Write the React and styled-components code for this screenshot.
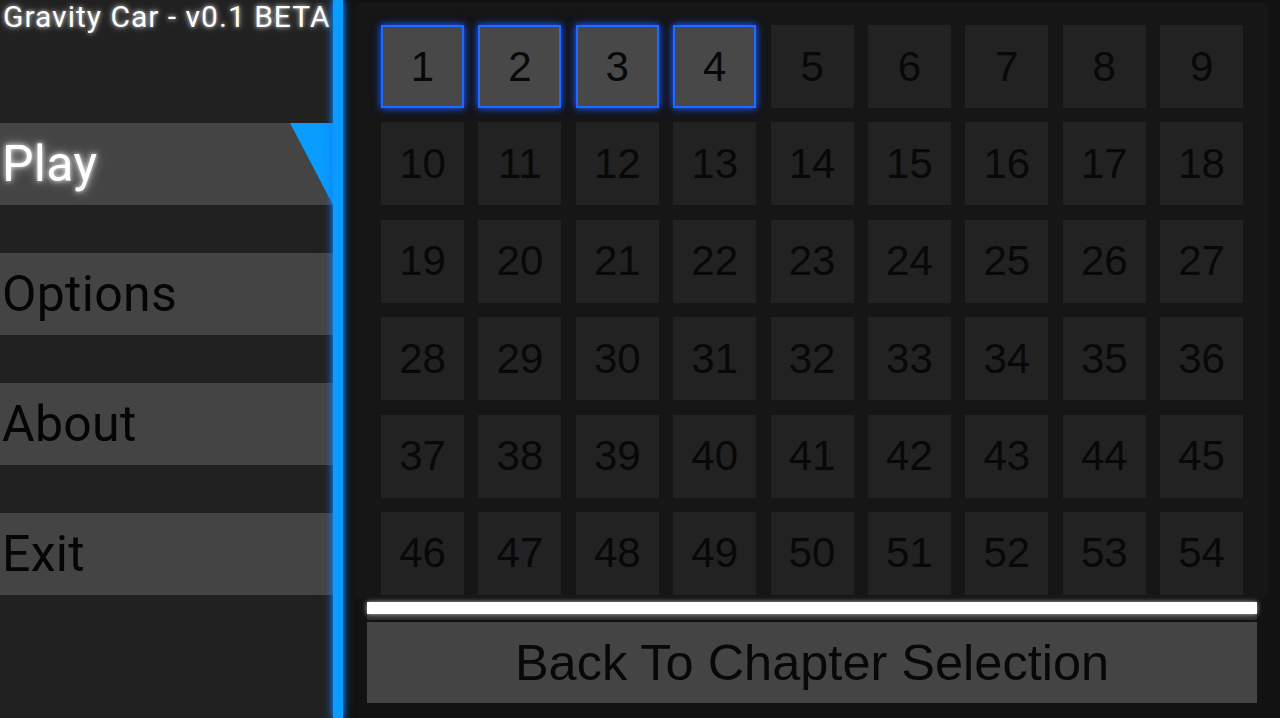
import React from 'react';
import styled, { createGlobalStyle } from 'styled-components';

const GlobalStyle = createGlobalStyle`
    html, body {
        margin: 0;
        padding: 0;
        background-color: #121212;
        overflow: hidden;
    }
`;

const Principal = styled.div`
    width: 1280px;
    height: 718px;
    display: flex;
    background-color: #121212;
`;

const BarraLateral = styled.div`
    width: 333px;
    flex-shrink: 0;
    background-color: #212121;
    display: flex;
    flex-direction: column;
    gap: 48px;
`;

const Titulo = styled.div`
    height: 75px;
    padding-left: 3px;
    font-family: Roboto, "Liberation Sans", sans-serif;
    font-size: 30px;
    letter-spacing: 1px;
    line-height: 34px;
    color: #ffffff;
    white-space: nowrap;
    text-shadow: 0 0 4px rgba(255, 255, 255, 0.7), 0 0 8px rgba(255, 255, 255, 0.4);
`;

const Opcion = styled.div`
    position: relative;
    height: 82px;
    display: flex;
    align-items: center;
    padding-left: 2px;
    background-color: #444444;
    font-family: Roboto, "Liberation Sans", sans-serif;
    font-size: 50px;
    letter-spacing: 0.3px;
    color: ${p => (p.$activa ? '#ffffff' : '#050505')};
    text-shadow: ${p => (p.$activa ? '0 0 5px rgba(255,255,255,0.9), 0 0 12px rgba(255,255,255,0.6)' : 'none')};

    &::after {
        content: '';
        display: ${p => (p.$activa ? 'block' : 'none')};
        position: absolute;
        top: 0;
        right: 0;
        width: 43px;
        height: 82px;
        background-color: #0a9cff;
        clip-path: polygon(0 0, 100% 0, 100% 100%);
    }
`;

const Separador = styled.div`
    width: 10px;
    flex-shrink: 0;
    background-color: #0a9cff;
    box-shadow: 0 0 6px #0a8cff, 0 0 12px rgba(10, 120, 255, 0.6);
    z-index: 1;
`;

const PanelNiveles = styled.div`
    flex: 1;
    display: flex;
    flex-direction: column;
    padding: 3px 12px 15px 12px;
`;

const Marco = styled.div`
    flex: 1;
    background-color: #161616;
    padding: 22px 0 0 26px;
    overflow: hidden;
`;

const Cuadricula = styled.div`
    display: grid;
    grid-template-columns: repeat(9, 83px);
    grid-auto-rows: 83px;
    gap: 14.4px;
`;

const Nivel = styled.div`
    box-sizing: border-box;
    display: flex;
    align-items: center;
    justify-content: center;
    background-color: ${p => (p.$abierto ? '#484848' : '#222222')};
    border: ${p => (p.$abierto ? '2px solid #1f6bff' : 'none')};
    box-shadow: ${p => (p.$abierto ? '0 0 6px #1a55ff, 0 0 10px rgba(20, 80, 255, 0.5)' : 'none')};
    font-family: "Liberation Sans", Arial, sans-serif;
    font-size: 42px;
    color: #080808;
`;

const Pie = styled.div`
    display: flex;
    flex-direction: column;
    padding: 0 11px 0 12px;
`;

const Linea = styled.div`
    height: 12px;
    margin-top: 4px;
    background-color: #ffffff;
    box-shadow: 0 0 5px rgba(255, 255, 255, 0.7), 0 6px 0 #2b2b2b;
`;

const BotonVolver = styled.div`
    height: 81px;
    margin-top: 8px;
    display: flex;
    align-items: center;
    justify-content: center;
    background-color: #444444;
    font-family: "Liberation Sans", Arial, sans-serif;
    font-size: 50.5px;
    color: #080808;
`;

const opciones = ['Play', 'Options', 'About', 'Exit'];
const niveles = Array.from({ length: 54 }, (_, i) => i + 1);

export default function App() {
    return (
        <>
            <GlobalStyle />
            <Principal>
                <BarraLateral>
                    <Titulo>Gravity Car - v0.1 BETA</Titulo>
                    {opciones.map((o, i) => (
                        <Opcion key={o} $activa={i === 0}>{o}</Opcion>
                    ))}
                </BarraLateral>
                <Separador />
                <PanelNiveles>
                    <Marco>
                        <Cuadricula>
                            {niveles.map(n => (
                                <Nivel key={n} $abierto={n <= 4}>{n}</Nivel>
                            ))}
                        </Cuadricula>
                    </Marco>
                    <Pie>
                        <Linea />
                        <BotonVolver>Back To Chapter Selection</BotonVolver>
                    </Pie>
                </PanelNiveles>
            </Principal>
        </>
    );
}
